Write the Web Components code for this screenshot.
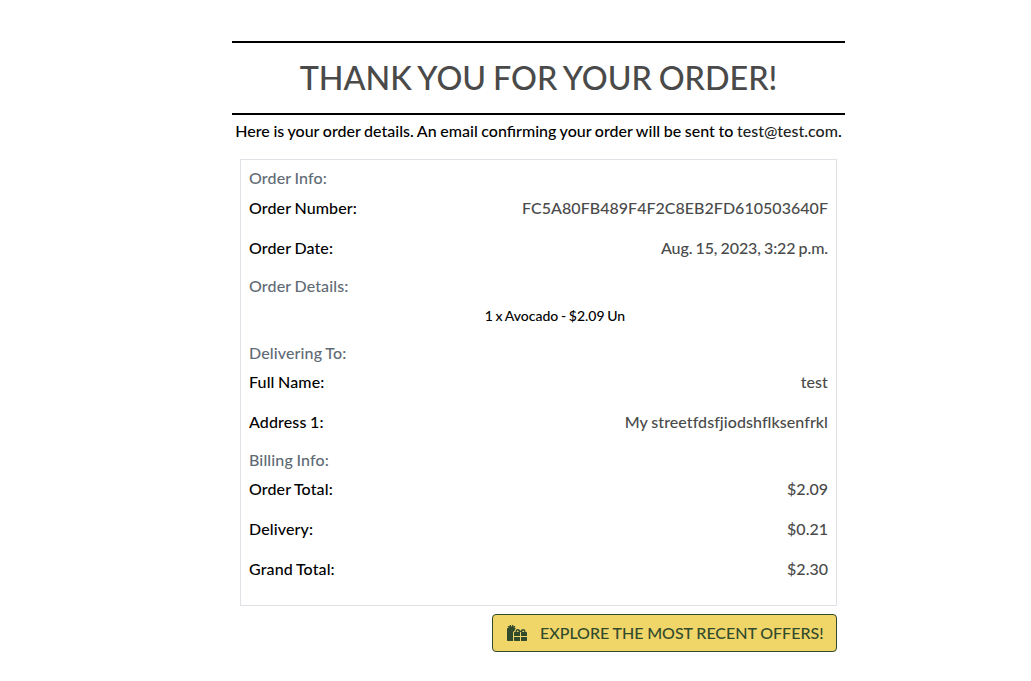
<!DOCTYPE html>
<html lang="en">
<head>
<meta charset="utf-8">
<title>Order confirmation</title>
<style>
body{margin:0;background:#fff;color:#000;font:500 16px/24px Lato,sans-serif}
</style>
</head>
<body>
<order-page>
  <order-heading slot="heading">THANK YOU FOR YOUR ORDER!</order-heading>
  <order-message>Here is your order details. An email confirming your order will be sent to <order-email>test@test.com</order-email>.</order-message>
  <order-card>
    <order-section label="Order Info:" style="--gap:6px">
      <order-row label="Order Number:" style="--track:.03px">FC5A80FB489F4F2C8EB2FD610503640F</order-row>
      <order-row label="Order Date:" style="--track:-.08px;--space:-.9px">Aug. 15, 2023, 3:22 p.m.</order-row>
    </order-section>
    <order-section label="Order Details:">
      <order-item>1 x Avocado - $2.09 Un</order-item>
    </order-section>
    <order-section label="Delivering To:">
      <order-row label="Full Name:">test</order-row>
      <order-row label="Address 1:" style="--track:.06px;--space:-.2px">My streetfdsfjiodshflksenfrkl</order-row>
    </order-section>
    <order-section label="Billing Info:">
      <order-row label="Order Total:" style="--track:0">$2.09</order-row>
      <order-row label="Delivery:" style="--track:0">$0.21</order-row>
      <order-row label="Grand Total:" style="--track:0">$2.30</order-row>
    </order-section>
  </order-card>
  <offers-button slot="action">EXPLORE THE MOST RECENT OFFERS!</offers-button>
</order-page>
<script>
const define = (name, html) => {
  const template = document.createElement('template');
  template.innerHTML = html;
  customElements.define(name, class extends HTMLElement {
    constructor() {
      super();
      this.attachShadow({mode: 'open'}).append(template.content.cloneNode(true));
    }
    connectedCallback() {
      const label = this.shadowRoot.querySelector('.label');
      if (label) label.textContent = this.getAttribute('label');
    }
  });
};

define('order-page', `<style>
  :host{display:flex;flex-direction:column;width:613px;margin-left:232px;padding-top:41px}
  .action{display:flex;justify-content:flex-end;margin:8px 8px 0}
</style><slot name="heading"></slot><slot></slot><div class="action"><slot name="action"></slot></div>`);

define('order-heading', `<style>
  :host{display:block;box-sizing:border-box;height:74px;border:solid #000;border-width:2px 0;color:#4a4a4a}
  h1{margin:0;font-size:32.3px;font-weight:500;line-height:70px;word-spacing:-1.4px;text-align:center;white-space:nowrap}
</style><h1><slot></slot></h1>`);

define('order-message', `<style>
  :host{display:block;margin-top:4px;word-spacing:-.4px;text-align:center;white-space:nowrap}
</style><slot></slot>`);

define('order-email', `<style>:host{color:#222}</style><slot></slot>`);

define('order-card', `<style>
  :host{display:block;box-sizing:border-box;height:447px;margin:16px 8px 0;padding:6px 8px;border:1px solid #dee2e6}
</style><slot></slot>`);

define('order-section', `<style>
  :host{display:block}
  .label{color:#5f6b75;margin-bottom:var(--gap,5px);letter-spacing:.13px;word-spacing:-.6px}
</style><div class="label"></div><slot></slot>`);

define('order-row', `<style>
  :host{display:flex;justify-content:space-between;height:24px;margin-bottom:16px;white-space:nowrap}
  :host(:last-child){margin-bottom:14px}
  .label{letter-spacing:.12px;word-spacing:-.6px}
  .value{color:#4a4a4a;letter-spacing:var(--track,.1px);word-spacing:var(--space,0)}
</style><span class="label"></span><span class="value"><slot></slot></span>`);

define('order-item', `<style>
  :host{display:block;padding:1px 0 0 33px;margin-bottom:13px;font-size:14px;word-spacing:-.9px;text-align:center}
</style><slot></slot>`);

define('offers-button', `<style>
  :host{display:block}
  button{display:flex;align-items:center;box-sizing:border-box;width:345px;height:38px;padding:0 12px 0 14px;border:1px solid #314a2c;border-radius:4px;background:#f0d569;color:#314a2c;font:inherit;word-spacing:-.35px;white-space:nowrap}
  svg{width:20px;height:16px;margin-right:13px;flex:none}
</style><button><svg viewBox="0 0 640 512" fill="currentColor" aria-hidden="true"><path d="M240.6 194.1c1.9-30.8 17.3-61.2 44-79.8C279.4 103.5 268.7 96 256 96h-29.4l30.7-22c7.2-5.1 8.9-15.1 3.7-22.3l-9.3-13c-5.1-7.2-15.1-8.9-22.3-3.7l-32 22.9 11.5-30.6c3.1-8.3-1.1-17.5-9.4-20.6l-15-5.6c-8.3-3.1-17.5 1.1-20.6 9.4l-19.9 53-19.9-53.1C121 2.1 111.8-2.1 103.5 1l-15 5.6C80.2 9.7 76 19 79.2 27.2l11.5 30.6L58.7 35c-7.2-5.1-17.2-3.5-22.3 3.7l-9.3 13c-5.1 7.2-3.5 17.2 3.7 22.3l30.7 22H32c-17.7 0-32 14.3-32 32v352c0 17.7 14.3 32 32 32h168.9c-5.5-9.5-8.9-20.3-8.9-32V256c0-29.9 20.8-55 48.6-61.9zM224 480c0 17.7 14.3 32 32 32h160V384H224v96zm224 32h160c17.7 0 32-14.3 32-32v-96H448v128zm160-288h-20.4c2.6-7.6 4.4-15.5 4.4-23.8 0-35.5-27-72.2-72.1-72.2-48.1 0-75.9 47.7-87.9 75.3-12.1-27.6-39.9-75.3-87.9-75.3-45.1 0-72.1 36.7-72.1 72.2 0 8.3 1.7 16.2 4.4 23.8H256c-17.7 0-32 14.3-32 32v96h192V224h32v128h192v-96c0-17.7-14.3-32-32-32zm-272 0c-2.7 0-4.8-.4-6.9-.9-7.7-2.8-17.1-10.3-17.1-22.9 0-9.7 6.1-24.2 24.1-24.2 17.3 0 34.6 23.8 45.7 48H336zm192 0h-45.8c11.2-24.2 28.4-48 45.7-48 18 0 24.1 14.5 24.1 24.2 0 12.6-9.4 20.1-17.1 22.9-2.1.5-4.2.9-6.9.9z"/></svg><slot></slot></button>`);
</script>
</body>
</html>
